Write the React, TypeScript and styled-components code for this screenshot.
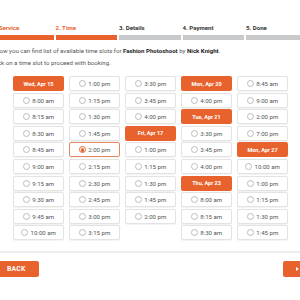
import { FunctionComponent } from "react";
import styled, { createGlobalStyle } from "styled-components";

const orange = "#e8622e";

const GlobalStyle = createGlobalStyle`
  body {
    margin: 0;
    overflow: hidden;
    background: #fff;
    font-family: Roboto, "Liberation Sans", sans-serif;
  }
`;

type Item = { day?: string; time?: string; selected?: boolean };

const columns: Item[][] = [
  [
    { day: "Wed, Apr 15" },
    { time: "8:00 am" },
    { time: "8:15 am" },
    { time: "8:30 am" },
    { time: "8:45 am" },
    { time: "9:00 am" },
    { time: "9:15 am" },
    { time: "9:30 am" },
    { time: "9:45 am" },
    { time: "10:00 am" },
  ],
  [
    { time: "1:00 pm" },
    { time: "1:15 pm" },
    { time: "1:30 pm" },
    { time: "1:45 pm" },
    { time: "2:00 pm", selected: true },
    { time: "2:15 pm" },
    { time: "2:30 pm" },
    { time: "2:45 pm" },
    { time: "3:00 pm" },
    { time: "3:15 pm" },
  ],
  [
    { time: "3:30 pm" },
    { time: "3:45 pm" },
    { time: "4:00 pm" },
    { day: "Fri, Apr 17" },
    { time: "1:00 pm" },
    { time: "1:15 pm" },
    { time: "1:30 pm" },
    { time: "1:45 pm" },
    { time: "2:00 pm" },
  ],
  [
    { day: "Mon, Apr 20" },
    { time: "4:00 pm" },
    { day: "Tue, Apr 21" },
    { time: "3:30 pm" },
    { time: "3:45 pm" },
    { time: "4:00 pm" },
    { day: "Thu, Apr 23" },
    { time: "8:00 am" },
    { time: "8:15 am" },
    { time: "8:30 am" },
  ],
  [
    { time: "8:45 am" },
    { time: "9:00 am" },
    { time: "2:00 pm" },
    { time: "7:00 pm" },
    { day: "Mon, Apr 27" },
    { time: "10:00 am" },
    { time: "1:00 pm" },
    { time: "1:15 pm" },
    { time: "1:30 pm" },
    { time: "1:45 pm" },
  ],
];

const steps = [
  { label: "1. Service", done: true },
  { label: "2. Time", done: true },
  { label: "3. Details", done: false },
  { label: "4. Payment", done: false },
  { label: "5. Done", done: false },
];

const Page = styled.div`
  width: 330px;
  margin-left: -9px;
  padding-top: 24px;
`;

const Steps = styled.div`
  display: flex;
  gap: 2px;
  padding-left: 1px;
`;

const Step = styled.div<{ $done: boolean }>`
  width: 61.5px;
  flex: none;
  color: ${({ $done }) => ($done ? orange : "#333")};
  font-size: 6.1px;
  font-weight: 700;
  line-height: 8px;
`;

const StepBar = styled.div<{ $done: boolean }>`
  margin-top: 3px;
  height: 5px;
  background: ${({ $done }) => ($done ? orange : "#c8c9ca")};
`;

const Intro = styled.div`
  margin-top: 5px;
  font-size: 6.1px;
  line-height: 12px;
  color: #555;
  b {
    color: #222;
  }
`;

const Grid = styled.div`
  display: flex;
  gap: 5px;
  align-items: flex-start;
  margin-top: 7px;
  padding-left: 22px;
`;

const Column = styled.div`
  width: 51px;
  display: flex;
  flex-direction: column;
  gap: 1.6px;
`;

const DayHeader = styled.div`
  height: 15px;
  border-radius: 2px;
  background: ${orange};
  color: #fff;
  font-size: 5.5px;
  font-weight: 700;
  display: flex;
  align-items: center;
  justify-content: center;
`;

const Slot = styled.div<{ $selected?: boolean }>`
  box-sizing: border-box;
  height: 15px;
  border: 1px solid ${({ $selected }) => ($selected ? "#e58a60" : "#e3e3e3")};
  border-radius: 2px;
  background: #fff;
  box-shadow: 0 0.5px 1px rgba(0, 0, 0, 0.05);
  display: flex;
  align-items: center;
  justify-content: center;
  gap: 2.5px;
  font-size: 6.1px;
  color: #555;
`;

const Radio = styled.span<{ $selected?: boolean }>`
  box-sizing: border-box;
  width: 7px;
  height: 7px;
  border-radius: 50%;
  border: 0.8px solid ${({ $selected }) => ($selected ? orange : "#bdbdbd")};
  display: flex;
  align-items: center;
  justify-content: center;
  &::after {
    content: "";
    width: 3.4px;
    height: 3.4px;
    border-radius: 50%;
    background: ${orange};
    display: ${({ $selected }) => ($selected ? "block" : "none")};
  }
`;

const Divider = styled.div`
  margin-top: 11px;
  height: 2px;
  background: #ececec;
`;

const Footer = styled.div`
  display: flex;
  justify-content: space-between;
  margin-top: 8px;
`;

const Button = styled.button`
  height: 16px;
  border: none;
  border-radius: 2px;
  background: ${orange};
  color: #fff;
  font-family: Roboto, "Liberation Sans", sans-serif;
  font-size: 6.8px;
  font-weight: 700;
  letter-spacing: 0.2px;
  display: flex;
  align-items: center;
  justify-content: flex-start;
  padding: 0 14px 0 16px;
`;

const NextButton = styled(Button)`
  width: 38px;
  padding: 0 0 0 13px;
`;

const Arrow = styled.span`
  width: 0;
  height: 0;
  border-top: 2px solid transparent;
  border-bottom: 2px solid transparent;
  border-left: 3px solid #fff;
`;

const TimeCell: FunctionComponent<{ item: Item }> = ({ item }) => {
  if (item.day) return <DayHeader>{item.day}</DayHeader>;
  return (
    <Slot $selected={item.selected}>
      <Radio $selected={item.selected} />
      {item.time}
    </Slot>
  );
};

export default function App() {
  return (
    <Page>
      <GlobalStyle />
      <Steps>
        {steps.map((s) => (
          <Step key={s.label} $done={s.done}>
            {s.label}
            <StepBar $done={s.done} />
          </Step>
        ))}
      </Steps>
      <Intro>
        Below you can find list of available time slots for <b>Fashion Photoshoot</b> by{" "}
        <b>Nick Knight</b>.
        <br />
        Click on a time slot to proceed with booking.
      </Intro>
      <Grid>
        {columns.map((col, i) => (
          <Column key={i}>
            {col.map((item, j) => (
              <TimeCell key={j} item={item} />
            ))}
          </Column>
        ))}
      </Grid>
      <Divider />
      <Footer>
        <Button>BACK</Button>
        <NextButton>
          <Arrow />
        </NextButton>
      </Footer>
    </Page>
  );
}
